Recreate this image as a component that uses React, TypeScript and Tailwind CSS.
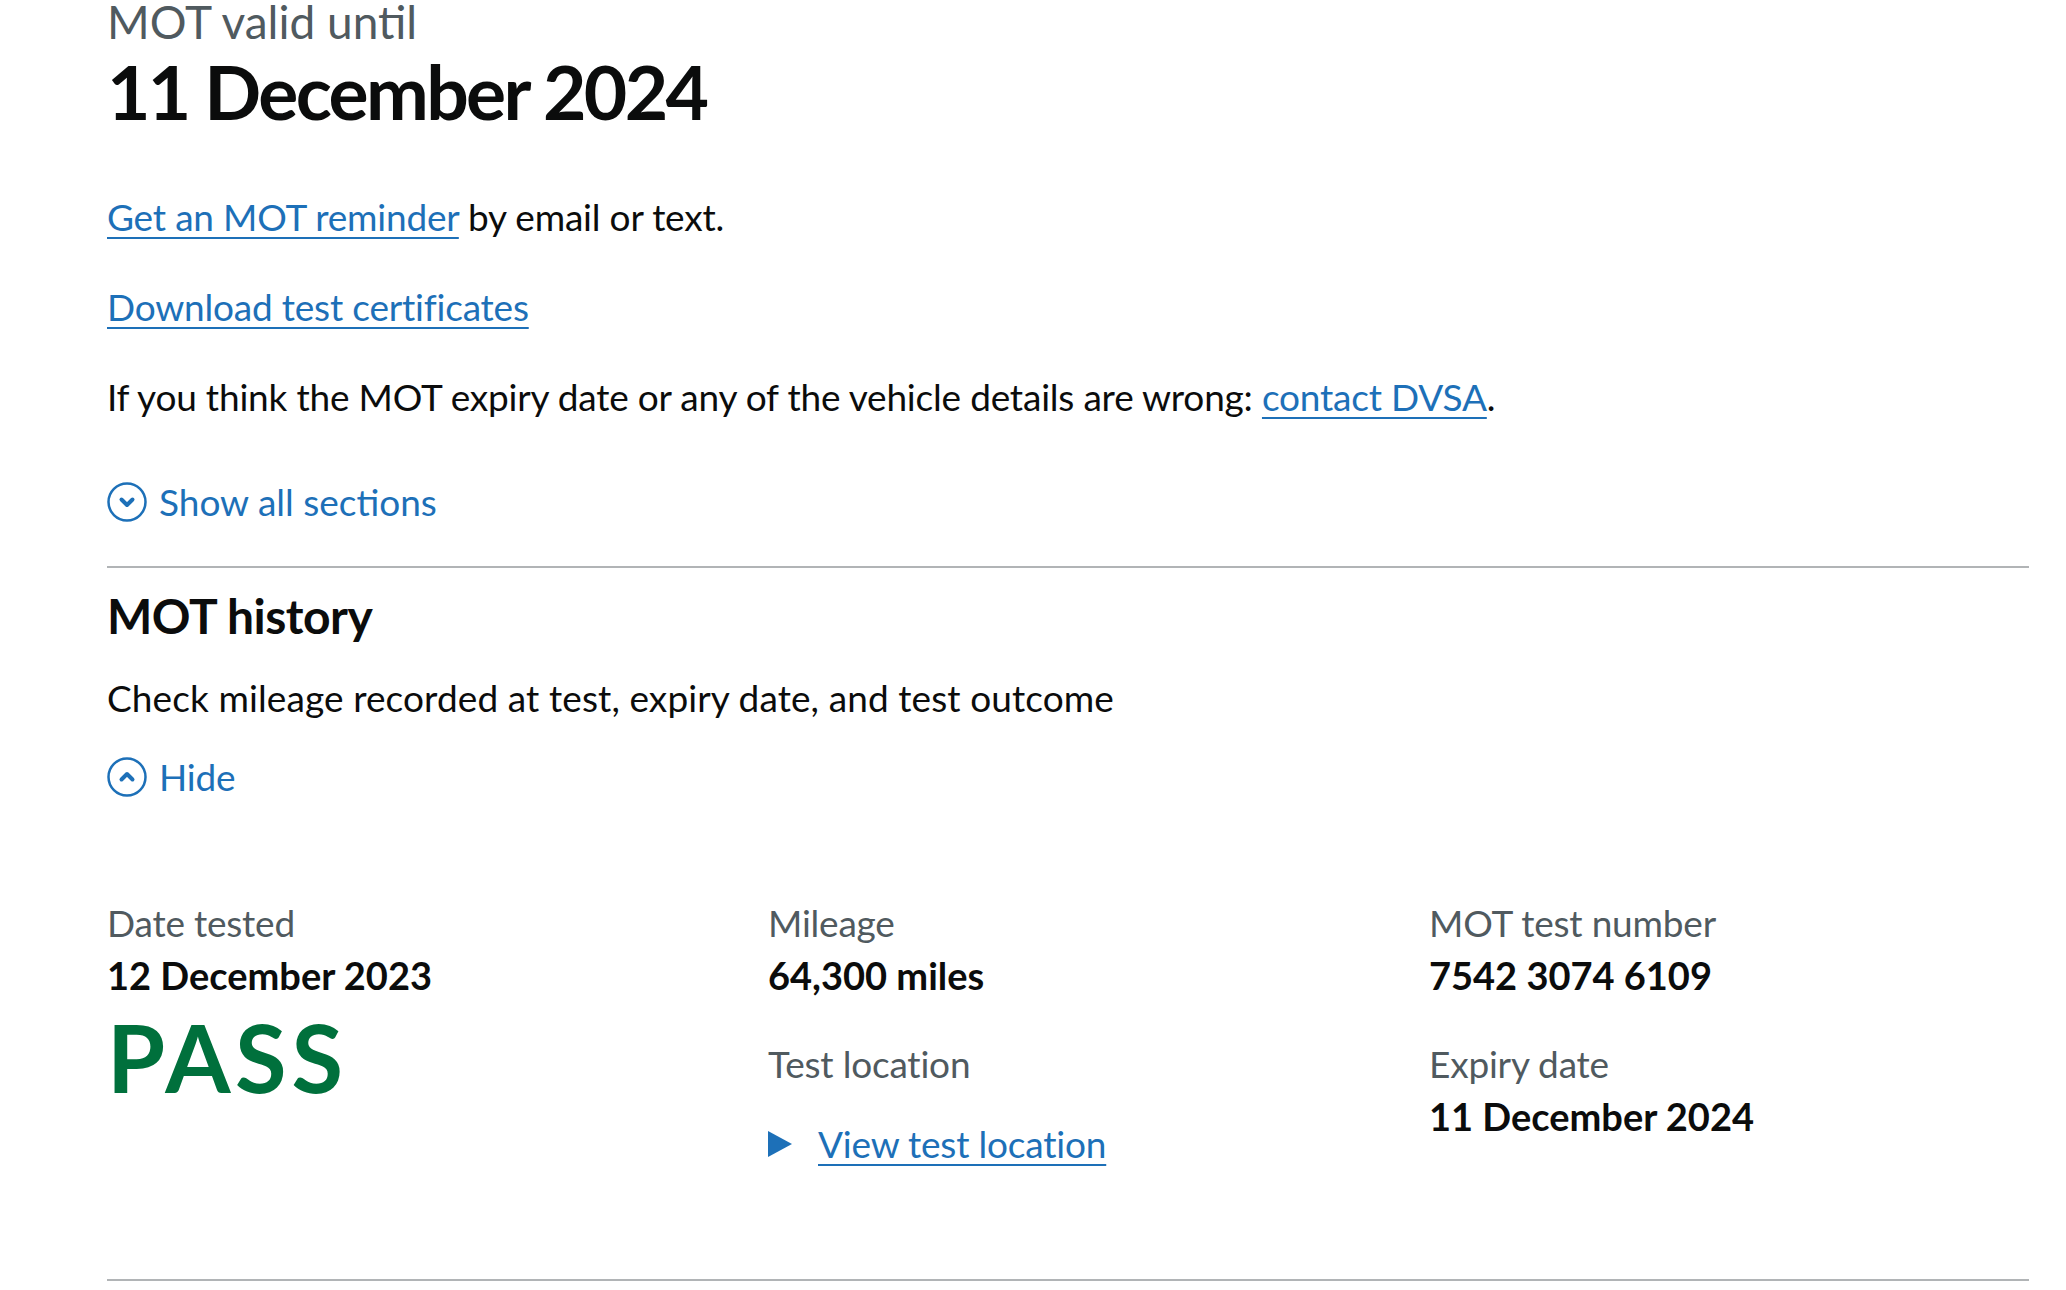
import React from "react";

const font = { fontFamily: "Lato, 'Noto Sans', sans-serif" };

function CircleChevron({ up }: { up?: boolean }) {
  return (
    <svg width="40" height="40" viewBox="0 0 40 40" className="shrink-0">
      <circle cx="20" cy="20" r="18.5" fill="none" stroke="#1d70b8" strokeWidth="2.5" />
      {up ? (
        <path d="M14.5 22.5 L20 17 L25.5 22.5" fill="none" stroke="#1d70b8" strokeWidth="4" strokeLinecap="round" strokeLinejoin="round" />
      ) : (
        <path d="M14.5 17.5 L20 23 L25.5 17.5" fill="none" stroke="#1d70b8" strokeWidth="4" strokeLinecap="round" strokeLinejoin="round" />
      )}
    </svg>
  );
}

// body copy is a touch narrower than the bold values
const body = "text-[37px] leading-[50px] tracking-[-0.2px]";

function Field({ label, value }: { label: string; value: string }) {
  return (
    <div>
      <div className={`${body} text-[#505a5f]`}>{label}</div>
      <div className="mt-[2px] text-[38px] leading-[50px] font-bold text-[#0b0c0c]">{value}</div>
    </div>
  );
}

export default function App() {
  const link = "text-[#1d70b8] underline decoration-[2px] underline-offset-[6px]";
  return (
    <div className="min-h-screen overflow-hidden bg-white text-[#0b0c0c]" style={font}>
      <main className="pl-[107px] pr-[37px]">
        <div className="-mt-[6px] text-[46px] leading-[56px] text-[#505a5f]">MOT valid until</div>
        <h1 className="mt-[1px] text-[75px] leading-[80px] font-bold tracking-[-0.035em]">11 December 2024</h1>

        <p className={`mt-[61px] ${body}`}>
          <a href="#" className={link}>Get an MOT reminder</a> by email or text.
        </p>
        <p className={`mt-[40px] ${body}`}>
          <a href="#" className={link}>Download test certificates</a>
        </p>
        <p className={`mt-[40px] ${body}`}>
          If you think the MOT expiry date or any of the vehicle details are wrong:{" "}
          <a href="#" className={link}>contact DVSA</a>.
        </p>

        <button className={`mt-[55px] flex items-center gap-[12px] text-[37px] leading-[50px] text-[#1d70b8]`}>
          <CircleChevron />
          <span>Show all sections</span>
        </button>

        <section className="mt-[39px] border-t-2 border-[#b1b4b6]">
          <h2 className="mt-[18px] text-[48px] leading-[60px] font-bold tracking-[-0.5px]">MOT history</h2>
          <p className="mt-[27px] text-[37px] leading-[50px] tracking-[0.1px]">
            Check mileage recorded at test, expiry date, and test outcome
          </p>
          <button className={`mt-[29px] flex items-center gap-[12px] ${body} text-[#1d70b8]`}>
            <CircleChevron up />
            <span>Hide</span>
          </button>

          <div className="mt-[96px] grid grid-cols-[661px_661px_1fr]">
            <div>
              <Field label="Date tested" value="12 December 2023" />
              <div className="mt-[7px] text-[94px] leading-[100px] font-bold tracking-[0.05em] text-[#00703c]">PASS</div>
            </div>
            <div>
              <Field label="Mileage" value="64,300 miles" />
              <div className={`mt-[39px] ${body} text-[#505a5f]`}>Test location</div>
              <div className={`mt-[30px] flex items-center ${body}`}>
                <svg width="24" height="26" viewBox="0 0 24 26" className="shrink-0">
                  <path d="M0 0 L24 13 L0 26 Z" fill="#1d70b8" />
                </svg>
                <a href="#" className={`${link} ml-[26px]`}>View test location</a>
              </div>
            </div>
            <div>
              <Field label="MOT test number" value="7542 3074 6109" />
              <div className="mt-[39px]">
                <Field label="Expiry date" value="11 December 2024" />
              </div>
            </div>
          </div>

          <div className="mt-[110px] border-t-2 border-[#b1b4b6]" />
        </section>
      </main>
    </div>
  );
}
